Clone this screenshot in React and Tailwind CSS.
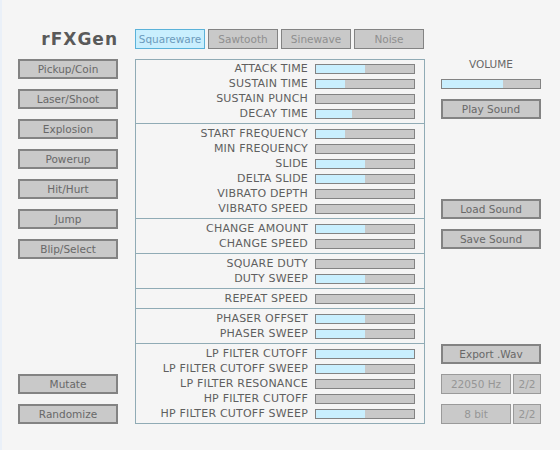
import React from 'react';

const sections = [
  [
    ['ATTACK TIME', 50],
    ['SUSTAIN TIME', 30],
    ['SUSTAIN PUNCH', 0],
    ['DECAY TIME', 37],
  ],
  [
    ['START FREQUENCY', 30],
    ['MIN FREQUENCY', 0],
    ['SLIDE', 50],
    ['DELTA SLIDE', 50],
    ['VIBRATO DEPTH', 0],
    ['VIBRATO SPEED', 0],
  ],
  [
    ['CHANGE AMOUNT', 50],
    ['CHANGE SPEED', 0],
  ],
  [
    ['SQUARE DUTY', 0],
    ['DUTY SWEEP', 50],
  ],
  [['REPEAT SPEED', 0]],
  [
    ['PHASER OFFSET', 50],
    ['PHASER SWEEP', 50],
  ],
  [
    ['LP FILTER CUTOFF', 100],
    ['LP FILTER CUTOFF SWEEP', 50],
    ['LP FILTER RESONANCE', 0],
    ['HP FILTER CUTOFF', 0],
    ['HP FILTER CUTOFF SWEEP', 50],
  ],
];

const presets = ['Pickup/Coin', 'Laser/Shoot', 'Explosion', 'Powerup', 'Hit/Hurt', 'Jump', 'Blip/Select'];
const waves = ['Squareware', 'Sawtooth', 'Sinewave', 'Noise'];

function Button({ children }) {
  return (
    <div className="w-[100px] h-[20px] shrink-0 border-2 border-[#838383] bg-[#c9c9c9] flex items-center justify-center text-[10.5px] text-[#686868] leading-none">
      {children}
    </div>
  );
}

function Slider({ value }) {
  return (
    <div className="w-[100px] h-[10px] border border-[#838383] bg-[#c9c9c9] flex">
      <div className="h-full bg-[#c9effe]" style={{ width: `${value}%` }} />
    </div>
  );
}

function Combo({ label }) {
  return (
    <div className="flex h-[20px] w-[100px] gap-[2px] text-[10.5px] text-[#969696] leading-none">
      <div className="w-[70px] border border-[#9a9a9a] bg-[#c9c9c9] flex items-center justify-center">{label}</div>
      <div className="flex-1 border border-[#9a9a9a] bg-[#c9c9c9] flex items-center justify-center">2/2</div>
    </div>
  );
}

export default function App() {
  return (
    <div
      className="w-[560px] h-[450px] bg-[#f5f5f5] flex border-l-2 border-[#eaf0f8] text-[#686868]"
      style={{ fontFamily: '"DejaVu Sans", sans-serif' }}
    >
      {/* left column */}
      <div className="pl-[16px] pt-[29px] pb-[26px] flex flex-col">
        <div className="h-[20px] w-[100px] flex items-center justify-end text-[17px] font-bold tracking-[1px] text-[#5a5a5a] leading-none">
          rFXGen
        </div>
        <div className="mt-[10px] flex flex-col gap-[10px]">
          {presets.map((p) => (
            <Button key={p}>{p}</Button>
          ))}
        </div>
        <div className="mt-auto flex flex-col gap-[10px]">
          <Button>Mutate</Button>
          <Button>Randomize</Button>
        </div>
      </div>

      {/* center column */}
      <div className="ml-[17px] pt-[29px] flex flex-col">
        <div className="flex gap-[3px] h-[20px]">
          {waves.map((w, i) => (
            <div
              key={w}
              className={
                i === 0
                  ? 'w-[70px] border border-[#5bb2d9] bg-[#c9effe] text-[#6c9bbc] text-[10.5px] flex items-center justify-center leading-none'
                  : 'w-[70px] border border-[#838383] bg-[#c9c9c9] text-[#8f8f8f] text-[10.5px] flex items-center justify-center leading-none'
              }
            >
              {w}
            </div>
          ))}
        </div>
        <div className="mt-[10px] w-[290px] border border-[#90abb5] flex flex-col">
          {sections.map((rows, si) => (
            <div
              key={si}
              className={
                si === 0
                  ? 'pt-[4px] pb-[4px] flex flex-col gap-[5px]'
                  : 'border-t border-[#90abb5] pt-[5px] pb-[4px] flex flex-col gap-[5px]'
              }
            >
              {rows.map(([label, v]) => (
                <div key={label} className="h-[10px] flex items-center justify-end pr-[9px] gap-[7px]">
                  <span className="text-[11px] leading-[10px] tracking-[0.2px] whitespace-nowrap text-[#5f5f5f]">{label}</span>
                  <Slider value={v} />
                </div>
              ))}
            </div>
          ))}
        </div>
      </div>

      {/* right column */}
      <div className="ml-[16px] pt-[58px] flex flex-col">
        <div className="h-[12px] w-[100px] flex items-center justify-center text-[10.5px] leading-none">VOLUME</div>
        <div className="mt-[9px]">
          <Slider value={62} />
        </div>
        <div className="mt-[10px]">
          <Button>Play Sound</Button>
        </div>
        <div className="mt-[80px] flex flex-col gap-[10px]">
          <Button>Load Sound</Button>
          <Button>Save Sound</Button>
        </div>
        <div className="mt-[95px] flex flex-col gap-[10px]">
          <Button>Export .Wav</Button>
          <Combo label="22050 Hz" />
          <Combo label="8 bit" />
        </div>
      </div>
    </div>
  );
}
